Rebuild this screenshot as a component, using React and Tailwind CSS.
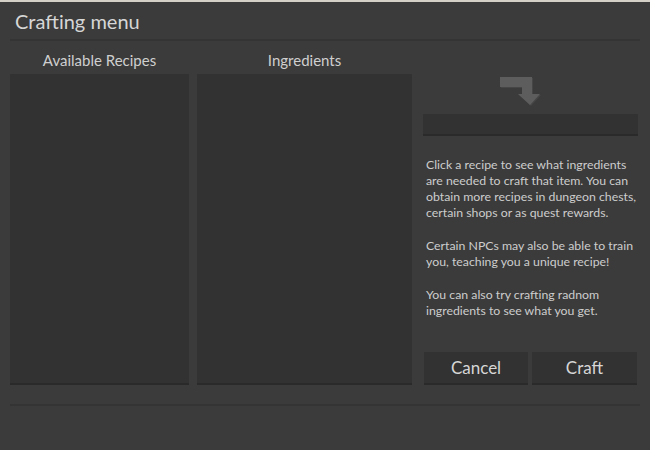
export default function App() {
  return (
    <div
      className="w-[650px] h-[450px] bg-[#3b3b3b] border-t-2 border-[#d4d0c8] text-[#d6d6d6] overflow-hidden"
      style={{ fontFamily: 'Lato, "Open Sans", sans-serif' }}
    >
      {/* Header */}
      <div className="h-[37px] px-[15px] flex items-center">
        <h1 className="text-[20px] leading-none pt-[1px]">Crafting menu</h1>
      </div>
      <div className="mx-[10px] h-[2px] bg-[#343434]" />

      <div className="flex px-[10px] pt-[10px]">
        {/* Recipes */}
        <div className="w-[179px] flex flex-col">
          <div className="h-[23px] text-center text-[15px] leading-[18px] text-[#cfcfcf]">Available Recipes</div>
          <div className="h-[311px] bg-[#323232] border-b-2 border-[#2a2a2a]" />
        </div>

        {/* Ingredients */}
        <div className="w-[215px] ml-[8px] flex flex-col">
          <div className="h-[23px] text-center text-[15px] leading-[18px] text-[#cfcfcf]">Ingredients</div>
          <div className="h-[311px] bg-[#323232] border-b-2 border-[#2a2a2a]" />
        </div>

        {/* Details */}
        <div className="w-[215px] ml-[11px] flex flex-col">
          <div className="h-[63px] flex items-end pb-[7px] pl-[77px]">
            <svg width="42" height="30" viewBox="0 0 42 30">
              <path d="M1 1 H33 V18 H41 L31 29 L19 18 H23 V11 H1 Z" fill="#464646" />
              <path d="M0 0 H32 V17 H40 L30 28 L18 17 H22 V10 H0 Z" fill="#5d5d5d" />
            </svg>
          </div>
          <div className="h-[22px] bg-[#323232] border-b-2 border-[#2a2a2a]" />
          <div className="pt-[21px] px-[3px] text-[12.3px] leading-[16px] text-[#cdcdcd] whitespace-nowrap">
            <p>
              Click a recipe to see what ingredients<br />
              are needed to craft that item. You can<br />
              obtain more recipes in dungeon chests,<br />
              certain shops or as quest rewards.
            </p>
            <p className="mt-[17px]">
              Certain NPCs may also be able to train<br />
              you, teaching you a unique recipe!
            </p>
            <p className="mt-[17px]">
              You can also try crafting radnom<br />
              ingredients to see what you get.
            </p>
          </div>
          <div className="mt-auto flex gap-[4px] pl-[1px]">
            <button className="w-[104px] h-[33px] bg-[#323232] border-b-2 border-[#2a2a2a] text-[17px] text-[#d6d6d6]">Cancel</button>
            <button className="w-[105px] h-[33px] bg-[#323232] border-b-2 border-[#2a2a2a] text-[17px] text-[#d6d6d6]">Craft</button>
          </div>
        </div>
      </div>

      <div className="mx-[10px] mt-[19px] h-[2px] bg-[#343434]" />
    </div>
  );
}
